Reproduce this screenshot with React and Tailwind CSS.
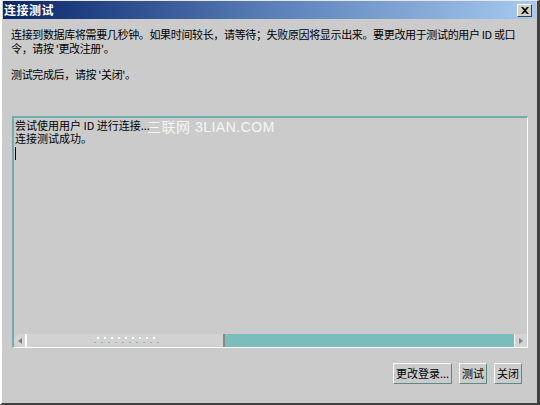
import React from 'react';

export default function App() {
  const font = { fontFamily: '"Noto Sans CJK SC", "Liberation Sans", sans-serif' };

  return (
    <div className="w-[540px] h-[405px] bg-[#cbcbcb] flex flex-col border-l-2 border-t border-l-white border-t-[#e8e8e8] border-r-[3px] border-r-[#404040] border-b-2 border-b-[#404040] overflow-hidden text-black" style={font}>
      {/* title bar */}
      <div className="h-[18px] mx-px flex items-center justify-between bg-gradient-to-r from-[#0a246a] via-[#5a7fb8] to-[#a6caf0] pl-[1px] pr-[4px]">
        <span className="text-white font-bold text-[12px] leading-none tracking-[0.5px]">连接测试</span>
        <button className="w-[15px] h-[13px] bg-[#d4d0c8] border border-t-white border-l-white border-r-[#404040] border-b-[#404040] flex items-center justify-center">
          <svg width="8" height="7" viewBox="0 0 8 7">
            <path d="M0 0h2l2 2 2-2h2L5 3.5 8 7H6L4 5 2 7H0l3-3.5z" fill="#000" />
          </svg>
        </button>
      </div>

      {/* message */}
      <div className="pl-[9px] pt-[8px] text-[11px] leading-[14px] tracking-[-0.35px]">
        <p className="whitespace-nowrap">连接到数据库将需要几秒钟。如果时间较长，请等待；失败原因将显示出来。要更改用于测试的用户 ID 或口</p>
        <p>令，请按 '更改注册'。</p>
        <p className="mt-[12px]">测试完成后，请按 '关闭'。</p>
      </div>

      {/* log box */}
      <div className="ml-[10px] mt-[35px] w-[516px] h-[232px] flex flex-col border-t-2 border-l-2 border-t-[#6fadad] border-l-[#6fadad] border-r border-b border-r-white border-b-white">
        <div className="relative flex-1 pl-[1px] pt-[1px] text-[11px] leading-[13px]">
          <p>尝试使用用户 ID 进行连接...</p>
          <p>连接测试成功。</p>
          <div className="w-px h-[13px] bg-black mt-[2px]" />
          <span className="absolute left-[133px] top-[3px] text-[14px] text-white/80 tracking-[0.5px]" style={{ fontFamily: '"Liberation Sans", "Noto Sans CJK SC", sans-serif' }}>三联网 3LIAN.COM</span>
        </div>
        <div className="h-[13px] flex items-stretch">
          <div className="w-[13px] bg-[#d4d4d4] rounded-l-full border-r-2 border-r-white flex items-center justify-center">
            <svg width="4" height="6" viewBox="0 0 4 6"><path d="M4 0v6L0 3z" fill="#6a8a8a" /></svg>
          </div>
          <div className="w-[198px] bg-[#d2d2d2] border-r-2 border-r-[#8a8a8a] flex items-center justify-center pl-[4px]">
            <svg width="66" height="8" viewBox="0 0 66 8">
              {[0, 7, 14, 21, 28, 35, 42, 49, 56, 63].map((x) => (
                <g key={x}>
                  <rect x={x + 3} y="0" width="2" height="2" fill="#ffffff" />
                  <rect x={x} y="5" width="2" height="1" fill="#7fb8b8" />
                </g>
              ))}
            </svg>
          </div>
          <div className="flex-1 bg-[#7bbcbc]" />
          <div className="w-[13px] bg-[#d4d4d4] border-l border-l-white flex items-center justify-center">
            <svg width="4" height="6" viewBox="0 0 4 6"><path d="M0 0v6L4 3z" fill="#6a8a8a" /></svg>
          </div>
        </div>
      </div>

      {/* buttons */}
      <div className="flex justify-end gap-[7px] pr-[15px] mt-[15px] text-[11px]">
        <button className="w-[59px] h-[21px] bg-[#cbcbcb] border border-t-white border-l-white border-r-[#5a8a8a] border-b-[#5a8a8a] leading-none whitespace-nowrap">更改登录...</button>
        <button className="w-[28px] h-[21px] bg-[#cbcbcb] border border-t-white border-l-white border-r-[#5a8a8a] border-b-[#5a8a8a] leading-none whitespace-nowrap">测试</button>
        <button className="w-[28px] h-[21px] bg-[#cbcbcb] border border-t-white border-l-white border-r-[#5a8a8a] border-b-[#5a8a8a] leading-none whitespace-nowrap">关闭</button>
      </div>
    </div>
  );
}
